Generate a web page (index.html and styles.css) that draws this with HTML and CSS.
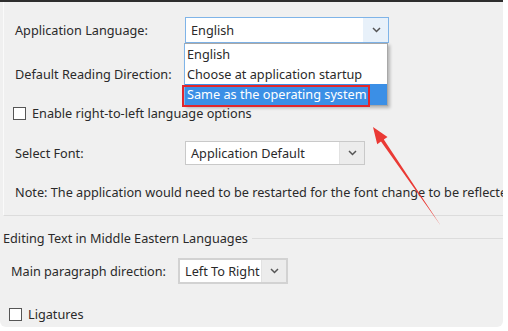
FILE: index.html
```html
<!DOCTYPE html>
<html lang="en">
<head>
    <meta charset="UTF-8">
    <title>Language Preferences</title>
    <link rel="stylesheet" href="styles.css">
</head>
<body>
    <div class="window">
        <!-- General language settings -->
        <div class="general">
            <div class="row row-lang">
                <span class="label">Application Language:</span>
                <div class="select select-focus select-lang">
                    <span class="value">English</span>
                    <span class="arrow"><svg width="9" height="6" viewBox="0 0 9 6"><path d="M1 1l3.5 3.5L8 1" fill="none" stroke="#555" stroke-width="1.5"/></svg></span>
                </div>
            </div>
            <div class="row row-dir">
                <span class="label">Default Reading Direction:</span>
            </div>
            <div class="check row-rtl">
                <span class="box"></span>
                <span>Enable right-to-left language options</span>
            </div>
            <div class="row row-font">
                <span class="label">Select Font:</span>
                <div class="select select-font">
                    <span class="value">Application Default</span>
                    <span class="arrow"><svg width="9" height="6" viewBox="0 0 9 6"><path d="M1 1l3.5 3.5L8 1" fill="none" stroke="#555" stroke-width="1.5"/></svg></span>
                </div>
            </div>
            <p class="note">Note: The application would need to be restarted for the font change to be reflected.</p>
        </div>

        <!-- Middle Eastern group -->
        <div class="group">
            <div class="group-title"><span>Editing Text in Middle Eastern Languages</span></div>
            <div class="row row-para">
                <span class="label label-short">Main paragraph direction:</span>
                <div class="select select-para">
                    <span class="value">Left To Right</span>
                    <span class="arrow"><svg width="9" height="6" viewBox="0 0 9 6"><path d="M1 1l3.5 3.5L8 1" fill="none" stroke="#555" stroke-width="1.5"/></svg></span>
                </div>
            </div>
            <div class="check row-lig">
                <span class="box"></span>
                <span>Ligatures</span>
            </div>
        </div>

        <!-- Open dropdown list of the language select -->
        <ul class="dropdown">
            <li>English</li>
            <li>Choose at application startup</li>
            <li class="selected">Same as the operating system</li>
        </ul>

        <!-- Annotation -->
        <div class="callout-box"></div>
        <svg class="callout-arrow" width="508" height="331" viewBox="0 0 508 331">
            <polygon points="373,127 387.5,137 383.8,139.6 441,226 381,141.6 377.2,144.2" fill="#ea3a35"/>
        </svg>
    </div>
</body>
</html>
```

FILE: styles.css
```css
body {
    margin: 0;
    padding: 0;
    background: #fff;
    font-family: "Noto Sans", "Open Sans", sans-serif;
    font-size: 12.7px;
    color: #2a2a2a;
}

.window {
    position: relative;
    width: 503px;
    height: 325px;
    background: #f0f0f0;
    border-top: 2px solid #2e2e2e;
    border-radius: 0 0 6px 6px;
    overflow: hidden;
}

.general {
    margin-left: 3px;
    padding: 15px 0 13px 11px;
    border-bottom: 1px solid #dcdcdc;
    border-left: 1px solid #fafafa;
}

.row {
    display: flex;
    align-items: center;
}

.label {
    width: 170px;
    flex-shrink: 0;
}

.label-short {
    width: 167px;
}

.row-lang {
    height: 26px;
}

.row-dir {
    height: 20px;
    margin-top: 21px;
}

.row-font {
    height: 24px;
    margin-top: 19px;
}

.select {
    display: flex;
    align-items: stretch;
    height: 100%;
    box-sizing: border-box;
    border: 1px solid #c9c9c9;
    background: #fff;
}

.select .value {
    flex: 1;
    display: flex;
    align-items: center;
    padding-left: 5px;
}

.select .arrow {
    width: 24px;
    display: flex;
    align-items: center;
    justify-content: center;
    background: #ececec;
    border-left: 1px solid #e2e2e2;
}

.select-focus {
    border-color: #7fb4e8;
}

.select-focus .arrow {
    background: #e8f1fa;
    border-left-color: #e8f1fa;
}

.select-lang {
    width: 204px;
}

.select-font {
    width: 180px;
}

.select-para {
    width: 110px;
    border: 2px solid #d2d2d2;
}

.check {
    display: flex;
    align-items: center;
    height: 18px;
}

.check .box {
    width: 13px;
    height: 13px;
    box-sizing: border-box;
    border: 1px solid #555;
    background: #fff;
    margin: 0 6px 0 -2px;
}

.row-rtl {
    margin-top: 20px;
}

.note {
    margin: 17px 0 0;
    height: 20px;
    line-height: 20px;
    white-space: nowrap;
}

.group {
    padding: 13px 0 0 11px;
}

.group-title {
    display: flex;
    align-items: center;
    height: 18px;
    margin-left: -8px;
}

.group-title::after {
    content: "";
    flex: 1;
    height: 1px;
    background: #dcdcdc;
    margin-left: 4px;
}

.row-para {
    height: 26px;
    margin-top: 11px;
}

.row-lig {
    margin-top: 21px;
}

.dropdown {
    position: absolute;
    left: 184px;
    top: 41px;
    width: 204px;
    margin: 0;
    padding: 0;
    list-style: none;
    box-sizing: border-box;
    background: #fff;
    border: 1px solid #a8a8a8;
    border-left-color: #7fb4e8;
    box-shadow: 2px 2px 3px rgba(0, 0, 0, 0.25);
}

.dropdown li {
    height: 20px;
    line-height: 20px;
    padding-left: 2px;
    white-space: nowrap;
}

.dropdown li.selected {
    background: #3b8fe6;
    color: #fff;
    height: 21px;
    line-height: 21px;
}

.callout-box {
    position: absolute;
    left: 182px;
    top: 83px;
    width: 188px;
    height: 22px;
    box-sizing: border-box;
    border: 2px solid #e2262c;
}

.callout-arrow {
    position: absolute;
    left: 0;
    top: -2px;
}
```
